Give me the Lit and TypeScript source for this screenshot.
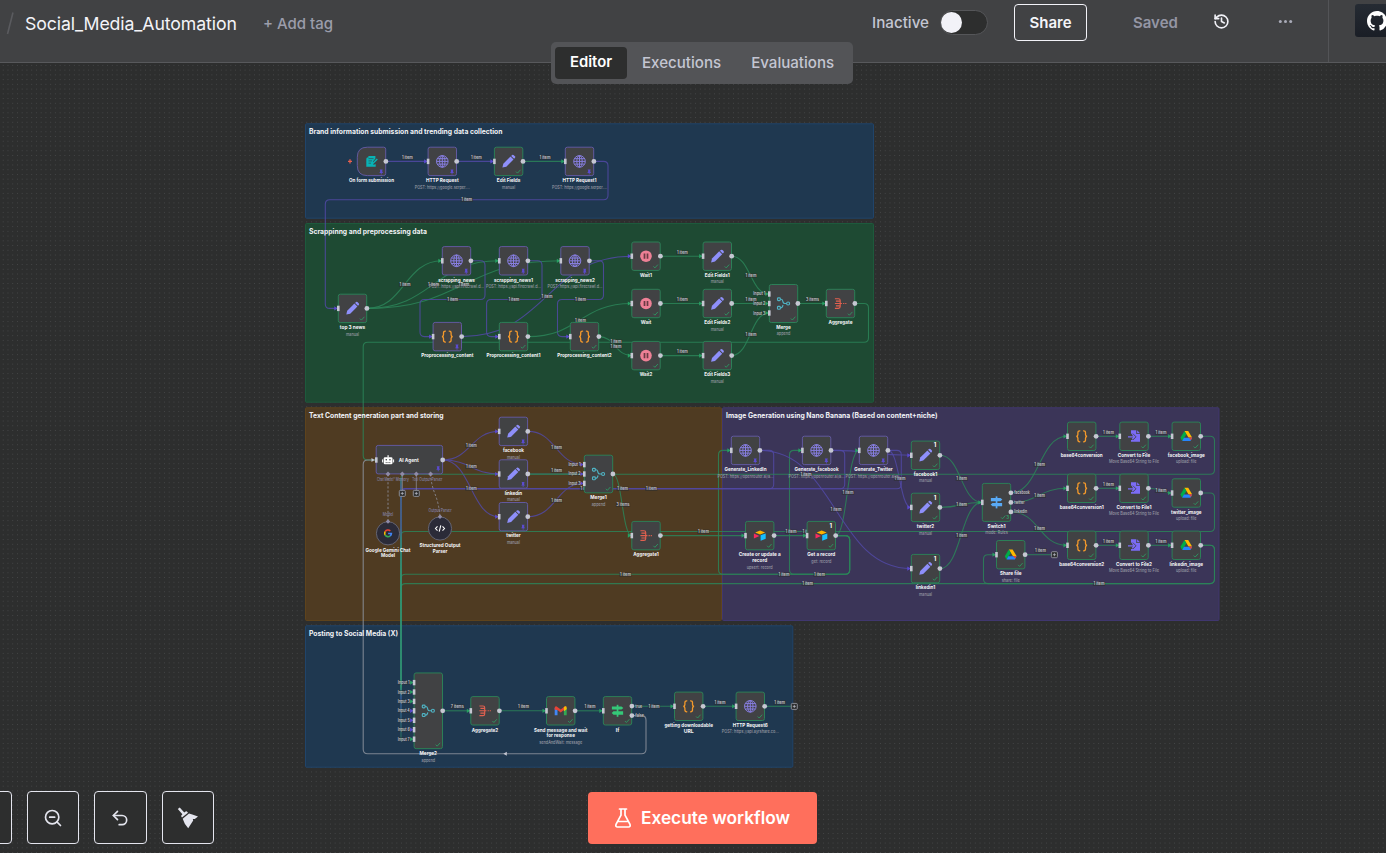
import { LitElement, html, svg, css, nothing } from "lit";
import { customElement } from "lit/decorators.js";

type Tone = "g" | "p" | "w" | "t";
const TONE: Record<Tone, string> = { g: "#2b8458", p: "#5149a5", w: "#8c929c", t: "#2f7f86" };

interface Sticky { x: number; y: number; w: number; h: number; fill: string; line: string; title: string; tw: number; tx?: number }
const stickies: Sticky[] = [
  { x: 305, y: 123.3, w: 569, h: 95.4, fill: "#1f3850", line: "#20446a", title: "Brand information submission and trending data collection", tw: 193.5 },
  { x: 305, y: 223, w: 569, h: 179.7, fill: "#1e4a33", line: "#1d5a3c", title: "Scrappinng and preprocessing data", tw: 118 },
  { x: 305, y: 407.3, w: 417, h: 213.7, fill: "#4f3b22", line: "#5e431c", title: "Text Content generation part and storing", tw: 134.5 },
  { x: 722, y: 407.3, w: 497.5, h: 213.7, fill: "#3b3558", line: "#40376f", title: "Image Generation using Nano Banana (Based on content+niche)", tw: 211.5, tx: 726 },
  { x: 305, y: 625.3, w: 488.3, h: 142.4, fill: "#1f3850", line: "#20446a", title: "Posting to Social Media (X)", tw: 89 },
];

interface Node {
  x: number; y: number; icon: string; name: string[]; w: number[]; sub?: string; sw?: number;
  s?: "pin" | "ok"; one?: boolean; h?: number; ins?: number[]; outs?: number[]; start?: boolean;
}
const GS = "POST: https://google.serper....";
const FC = "POST: https://api.firecrawl.d...";
const OR = "POST: https://openrouter.ai/a...";
const MV = "Move Base64 String to File";
const n = (x: number, y: number, icon: string, name: string, w: number, s: "pin" | "ok", sub?: string, sw?: number, more: Partial<Node> = {}): Node =>
  ({ x, y, icon, name: [name], w: [w], s, sub, sw, ...more });
const nodes: Node[] = [
  n(371.5, 161.4, "form", "On form submission", 45, "pin", undefined, 0, { start: true, ins: [] }),
  n(442.3, 161.4, "globe", "HTTP Request", 32.7, "pin", GS, 55),
  n(508.6, 161.4, "pencil", "Edit Fields", 23.5, "ok", "manual", 13),
  n(579.5, 161.4, "globe", "HTTP Request1", 34, "pin", GS, 55),
  n(352.5, 308.4, "pencil", "top 3 news", 25.5, "ok", "manual", 13),
  n(456.5, 260.8, "globe", "scrapping_news", 36.7, "pin", FC, 55),
  n(513.5, 260.8, "globe", "scrapping_news1", 39, "pin", FC, 55),
  n(575, 260.8, "globe", "scrapping_news2", 39.7, "pin", FC, 55),
  n(447.3, 336.6, "braces", "Proprocessing_content", 52.3, "pin"),
  n(513.5, 336.6, "braces", "Proprocessing_content1", 54, "ok"),
  n(584.5, 336.6, "braces", "Proprocessing_content2", 54.5, "ok"),
  n(646, 256.2, "pause", "Wait1", 12, "ok"),
  n(646, 303.5, "pause", "Wait", 10.5, "ok"),
  n(646, 355.6, "pause", "Wait2", 12.5, "ok"),
  n(717.3, 256.2, "pencil", "Edit Fields1", 25, "ok", "manual", 13),
  n(717.3, 303.5, "pencil", "Edit Fields2", 26, "ok", "manual", 13),
  n(717.3, 355.6, "pencil", "Edit Fields3", 26, "ok", "manual", 13),
  n(783.5, 303.5, "merge", "Merge", 14.5, "ok", "append", 13.5, { h: 38, ins: [-9.5, 0, 9.5] }),
  n(840.5, 303.5, "agg", "Aggregate", 24, "ok"),
  n(513.4, 431.4, "pencil", "facebook", 21, "pin", "manual", 13),
  n(513.4, 474, "pencil", "linkedin", 17.5, "pin", "manual", 13),
  n(513.4, 516.7, "pencil", "twitter", 14.5, "pin", "manual", 13),
  n(598.5, 474, "merge", "Merge1", 16.5, "ok", "append", 13.5, { h: 37.6, ins: [-9.4, 0, 9.4] }),
  n(646, 535.6, "agg", "Aggregate1", 25.5, "ok"),
  n(745.5, 450.4, "globe", "Generate_LinkedIn", 42, "pin", OR, 56),
  n(816.6, 450.4, "globe", "Generate_facebook", 44, "pin", OR, 56),
  n(873.5, 450.4, "globe", "Generate_Twitter", 38.5, "pin", OR, 56),
  { x: 759.7, y: 535.6, icon: "table", name: ["Create or update a", "record"], w: [42, 15], sub: "upsert: record", sw: 26, s: "ok" },
  n(821.3, 535.6, "table", "Get a record", 28, "ok", "get: record", 20, { one: true }),
  n(925.5, 455.3, "pencil", "facebook1", 23.5, "ok", "manual", 13, { one: true }),
  n(925.5, 507.4, "pencil", "twitter2", 17.5, "ok", "manual", 13, { one: true }),
  n(925.5, 568.6, "pencil", "linkedin1", 19.5, "ok", "manual", 13, { one: true }),
  n(996.5, 502.4, "switch", "Switch1", 18, "ok", "mode: Rules", 22.5, { h: 38, outs: [-9.6, 0, 9.5] }),
  n(1010.7, 554.7, "drive", "Share file", 21.5, "ok", "share: file", 18),
  n(1081.7, 436.3, "braces", "base64conversion", 42, "ok"),
  n(1134, 436.3, "file", "Convert to File", 32.5, "ok", MV, 50),
  n(1186.3, 436.3, "drive", "facebook_image", 37, "ok", "upload: file", 20.5),
  n(1081.7, 488.3, "braces", "base64conversion1", 44, "ok"),
  n(1134, 488.3, "file", "Convert to File1", 35, "ok", MV, 50),
  n(1186.3, 493, "drive", "twitter_image", 30.5, "ok", "upload: file", 20.5),
  n(1081.7, 545.3, "braces", "base64conversion2", 45, "ok"),
  n(1134, 545.3, "file", "Convert to File2", 36, "ok", MV, 50),
  n(1186.3, 545.3, "drive", "linkedin_image", 33.5, "ok", "upload: file", 20.5),
  n(428.3, 710.8, "merge", "Merge2", 17.5, "ok", "append", 13.5, { h: 75.7, ins: [-28.2, -18.8, -9.4, 0, 9.5, 18.9, 28.4] }),
  n(485, 710.8, "agg", "Aggregate2", 26.5, "ok"),
  { x: 560.7, y: 710.8, icon: "gmail", name: ["Send message and wait", "for response"], w: [53.5, 28.5], sub: "sendAndWait: message", sw: 43, s: "ok" },
  n(617.5, 710.8, "sign", "If", 3.6, "ok", undefined, 0, { outs: [-4.7, 4.8] }),
  { x: 688.7, y: 706.3, icon: "braces", name: ["getting downloadable", "URL"], w: [48.5, 10], s: "ok" },
  n(750.3, 706.3, "globe", "HTTP Request6", 35, "ok", "POST: https://api.ayrshare.co...", 57),
];

/* Cubic link between two handles */
const bz = (x1: number, y1: number, x2: number, y2: number) => {
  const m = Math.max((x2 - x1) / 2, 9);
  return `M${x1} ${y1}C${x1 + m} ${y1} ${x2 - m} ${y2} ${x2} ${y2}`;
};
/* Orthogonal link with rounded corners */
const rt = (...p: number[]) => {
  const pts: number[][] = [];
  for (let i = 0; i < p.length; i += 2) pts.push([p[i], p[i + 1]]);
  let d = `M${pts[0]}`;
  for (let i = 1; i < pts.length - 1; i++) {
    const [a, b, c] = [pts[i - 1], pts[i], pts[i + 1]];
    const toward = (q: number[]) => {
      const l = Math.hypot(q[0] - b[0], q[1] - b[1]) || 1;
      const r = Math.min(4.5, l / 2);
      return [b[0] + ((q[0] - b[0]) * r) / l, b[1] + ((q[1] - b[1]) * r) / l];
    };
    d += `L${toward(a)}Q${b} ${toward(c)}`;
  }
  return d + `L${pts[pts.length - 1]}`;
};

const edges: [Tone, string, number?][] = [
  ["p", bz(386, 161.4, 427, 161.4)], ["p", bz(457, 161.4, 494, 161.4)], ["g", bz(523, 161.4, 565, 161.4)],
  ["p", rt(594, 161.4, 608, 161.4, 608, 199.7, 325.3, 199.7, 325.3, 308.4, 338, 308.4)],
  ["g", bz(366.8, 308.4, 442, 260.8)], ["g", bz(366.8, 308.4, 499, 260.8)], ["g", bz(366.8, 308.4, 560.5, 260.8)],
  ["p", rt(471, 260.8, 485, 260.8, 485, 299.5, 420, 299.5, 420, 336.6, 433, 336.6)],
  ["p", rt(528, 260.8, 542, 260.8, 542, 299.5, 486.6, 299.5, 486.6, 336.6, 499, 336.6)],
  ["p", rt(589, 260.8, 603.5, 260.8, 603.5, 299.5, 557.5, 299.5, 557.5, 336.6, 570, 336.6)],
  ["p", bz(461.5, 336.6, 631.7, 256.2)], ["g", bz(527.7, 336.6, 631.7, 303.5)], ["g", bz(598.7, 336.6, 631.7, 355.6)],
  ["g", bz(660, 256.2, 703, 256.2)], ["g", bz(660, 303.5, 703, 303.5)], ["g", bz(660, 355.6, 703, 355.6)],
  ["g", bz(731.6, 256.2, 769, 294)], ["g", bz(731.6, 303.5, 769, 303.5)], ["g", bz(731.6, 355.6, 769, 313)],
  ["g", bz(798, 303.5, 826, 303.5)],
  ["g", rt(855, 303.5, 868.5, 303.5, 868.5, 342.2, 363.2, 342.2, 363.2, 460, 375, 460)],
  ["p", bz(442.7, 460, 499, 431.4)], ["p", bz(442.7, 460, 499, 474)], ["p", bz(442.7, 460, 499, 516.7)],
  ["p", bz(528, 431.4, 584, 464.6)], ["t", bz(528, 474, 584, 474)], ["p", bz(528, 516.7, 584, 483.4)],
  ["g", bz(612.7, 474, 631.7, 535.6)], ["g", bz(660.5, 535.6, 745, 535.6)], ["g", bz(774, 535.6, 807, 535.6)],
  ["g", rt(835.5, 535.6, 849.7, 535.6, 849.7, 574.3, 718.5, 574.3, 718.5, 450.4, 731, 450.4)],
  ["g", rt(835.5, 535.6, 849.7, 535.6, 849.7, 574.3, 789.5, 574.3, 789.5, 450.4, 802, 450.4)],
  ["g", bz(835.5, 535.6, 859, 450.4)],
  ["g", rt(835.5, 535.6, 849.7, 535.6, 849.7, 574.3, 401, 574.3, 401, 600)],
  ["p", bz(760, 450.4, 911, 568.6)], ["p", bz(831, 450.4, 911, 455.3)], ["p", bz(888, 450.4, 911, 507.4)],
  ["p", rt(760, 450.4, 773.7, 450.4, 773.7, 488.8, 401, 488.8, 401, 500)],
  ["p", rt(831, 450.4, 844.7, 450.4, 844.7, 488.8, 401, 488.8, 401, 500)],
  ["p", rt(888, 450.4, 901.3, 450.4, 901.3, 488.8, 401, 488.8, 401, 500)],
  ["g", bz(940, 455.3, 982, 502.4)], ["g", bz(940, 507.4, 982, 502.4)], ["g", bz(940, 568.6, 982, 502.4)],
  ["g", bz(1011, 492.8, 1067, 436.3)], ["g", bz(1011, 502.4, 1067, 488.3)], ["g", bz(1011, 511.9, 1067, 545.3)],
  ["g", bz(1096, 436.3, 1120, 436.3)], ["g", bz(1148, 436.3, 1172, 436.3)],
  ["g", bz(1096, 488.3, 1120, 488.3)], ["g", bz(1148, 488.3, 1172, 493)],
  ["g", bz(1096, 545.3, 1120, 545.3)], ["g", bz(1148, 545.3, 1172, 545.3)],
  ["g", rt(1200.5, 436.3, 1214.5, 436.3, 1214.5, 474.3, 401, 474.3, 401, 500)],
  ["g", rt(1200.5, 493, 1214.5, 493, 1214.5, 531.5, 401, 531.5, 401, 560)],
  ["g", rt(1200.5, 545.3, 1214.5, 545.3, 1214.5, 583.6, 401, 583.6, 401, 610)],
  ["g", rt(1200.5, 545.3, 1214.5, 545.3, 1214.5, 583.6, 983.5, 583.6, 983.5, 554.7, 996, 554.7)],
  ["g", "M1025 554.7H1051"],
  ["g", bz(443, 710.8, 470, 710.8)], ["g", bz(499.5, 710.8, 546, 710.8)], ["g", bz(575, 710.8, 603, 710.8)],
  ["g", bz(632, 706.2, 674, 706.3)], ["g", bz(703, 706.3, 736, 706.3)], ["g", "M765 706.3H791"],
  ["w", rt(632, 715.6, 646, 715.6, 646, 753.8, 363.2, 753.8, 363.2, 460, 375, 460)],
];

/* x, y, text, width */
const tags: [number, number, string?, number?][] = [
  [407.3, 157.5], [476.3, 157.5], [545, 157.5], [466.7, 199.7],
  [405, 284.7], [433.5, 284.7], [463.8, 284.7], [452.7, 299.6], [513.8, 299.6], [580.5, 299.6], [547, 296.6], [580.5, 320.4],
  [616, 341.6], [616, 346.6], [682.3, 252.6], [682.3, 299.7], [682.3, 351.7], [751, 275.6], [751, 299.7], [751, 334.5], [812.5, 299.7, "3 items", 13],
  [471.3, 445.7], [471.3, 466.7], [471.3, 488.6], [556.7, 447.7], [556.7, 470.5], [556.7, 500.5],
  [586, 488.8], [622.7, 488.8], [651.3, 488.8], [623, 504.8, "3 items", 13], [703.5, 531.8], [791, 531.8], [808, 531.8],
  [784, 574.6], [819.5, 574.6], [625.5, 574.6], [848, 492.7], [836, 509.5], [806, 474.5], [900, 478.7],
  [961.7, 478.7], [961.7, 504.8], [961.7, 535.8], [1039.7, 464.7], [1039.7, 495.8], [1039.7, 528.7],
  [1108.5, 432.7], [1161, 432.7], [1108.5, 484.6], [1161, 490.8], [1108.5, 541.7], [1161, 541.7],
  [1099, 583.8], [807.7, 583.8], [1040.5, 550.7],
  [457.3, 706.5, "7 items", 13], [523.5, 706.5], [590, 706.5], [654, 706.4], [720, 702.6], [779.7, 702.6],
];
/* Port captions drawn next to multi-port nodes */
const ports: [number, number, string, number][] = [
  [759.3, 293.8, "Input 1", 12], [759.3, 303.6, "Input 2", 12], [759.3, 313, "Input 3", 12],
  [574.5, 464.7, "Input 1", 12], [574.5, 473.9, "Input 2", 12], [574.5, 483.5, "Input 3", 12],
  ...[0, 1, 2, 3, 4, 5, 6].map((i): [number, number, string, number] =>
    [403.7, 682.7 + i * 9.42, `Input ${i + 1}`, 12]),
];
const outs: [number, number, string, number][] = [
  [1022, 492.8, "facebook", 15.5], [1019.4, 502.5, "twitter", 10.5], [1020.6, 511.8, "linkedin", 13],
  [638.7, 706.4, "true", 6.8], [639.6, 715.7, "false", 8.5],
];

const signpost = (c: string) => svg`<g fill=${c}><rect x="-.8" y="-6" width="1.7" height="12"/><path d="M-5.6-4.4H4l1.800 1.600L4-1.200H-5.600z"/><path d="M5.600.500H-4l-1.800 1.700L-4 3.900H5.600z"/></g>`;

const icons: Record<string, unknown> = {
  globe: svg`<g fill="none" stroke="#877ee0" stroke-width="1"><circle r="5.8"/><ellipse rx="2.7" ry="5.8"/><path d="M-5.8 0H5.8M0-5.8V5.8M-5-2.7H5M-5 2.7H5"/></g>`,
  pencil: svg`<g fill="#8e8ffa"><path d="M-6.2 6.2l.9-3.9L1.9-4.9l3 3-7.2 7.2z"/><path d="M2.6-5.5l.9-.8q.9-.6 1.7.2l1 1q.8.9.1 1.7l-.8.8z"/></g>`,
  braces: svg`<g fill="none" stroke="#f59a2b" stroke-width="1.3" stroke-linecap="round"><path d="M-1.900-5.500q-1.900 0-1.900 1.800v1.800q0 1.600-1.500 1.900q1.500.3 1.500 1.900v1.800q0 1.800 1.900 1.800M1.900-5.500q1.900 0 1.900 1.800v1.800q0 1.600 1.500 1.900q-1.500.3-1.500 1.900v1.800q0 1.800-1.900 1.800"/></g>`,
  pause: svg`<circle r="5.8" fill="#ee8096"/><path d="M-1.5-2.6V2.6M1.5-2.6V2.6" stroke="#6b3a44" stroke-width="1.7"/>`,
  merge: svg`<g fill="none" stroke="#4fb3c4" stroke-width="1.15"><rect x="-6" y="-5.7" width="2.8" height="2.8" rx=".8"/><rect x="-6" y="2.9" width="2.8" height="2.8" rx=".8"/><circle cx="4.6" r="1.5"/><path d="M-3.2-4.3h.7q1.3 0 1.7 1.6l.3 1.2Q-.1 0 1.3 0H3.1M-3.2 4.3h.7q1.3 0 1.7-1.6l.3-1.2"/></g>`,
  agg: svg`<g fill="none" stroke="#e2604f" stroke-width="1.15"><path d="M-5.6-4.8H-2q1.7 0 1.7 1.7V3.1q0 1.7-1.7 1.7H-5.6M-4.6-2.4H-.4M-5.6 0H1.4M-4.6 2.4H-.4M2.6 0h1.2M4.7 0h1.2"/></g>`,
  form: svg`<path d="M-4.500-3.900h1.400v-1.600h7v2.700L1.500.2v2.800h2.200L4.200 2v3.400H-5.200V-2q0-1.200.7-1.900z" fill="#08b3b5"/><path d="M-3-2.800H2M-3-.5H.5M-3 1.800H-.5" stroke="#2d5a60" stroke-width=".8"/><path d="M1.300 2.200L5.800-2.400" stroke="#08b3b5" stroke-width="1.5"/>`,
  switch: signpost("#58a9f5"),
  sign: signpost("#35c878"),
  table: svg`<path d="M-4.6-3.1L.4-5l5 1.9-5 1.9z" fill="#fcb400"/><path d="M.9-.3L6-2.2V3.2L.9 5.2z" fill="#18bfff"/><path d="M-5.8-2.2L-.3.3-5.8 3z" fill="#f82b60"/>`,
  drive: svg`<path d="M-1.9-5.3H1.9L5.8 1.3H2.2z" fill="#ffba00"/><path d="M-1.9-5.3L-5.9 1.5-4.1 4.7 .1-2z" fill="#00ac47"/><path d="M-2.4 1.5H5.9L4.2 4.8h-8.3z" fill="#2684fc"/><path d="M2.3 1.3h3.6L4.6 3.9z" fill="#ea4335"/>`,
  file: svg`<path d="M-3-6H2.3V-2.4H6V5.4H-3V3.6h2.3L2.5.5-.7-2.6H-3z" fill="#7b6cf6"/><path d="M3.1-6L6-3.1H3.1z" fill="#7b6cf6"/><path d="M-6 .5H1M-1.8-2L.8.5-1.8 3" fill="none" stroke="#7b6cf6" stroke-width="1.2"/>`,
  gmail: svg`<path d="M-6-3v7.5h2.8V-1.4z" fill="#4285f4"/><path d="M6-3v7.5H3.2V-1.4z" fill="#34a853"/><path d="M-6-3q.2-1.9 2-1.4L0-1.3 4-4.4q1.4-.4 1.6.2L3.2-.8 0 1.6-3.2-.8-6-1z" fill="#ea4335"/><path d="M3.2-3.8q2.6-1.6 2.8.8v1.4L3.2.5z" fill="#fbbc04"/>`,
};

const caption = (x: number, y: number, text: string, w: number, cls: string, anchor = "middle") =>
  svg`<text class=${cls} x=${x} y=${y} text-anchor=${anchor} textLength=${w} lengthAdjust="spacingAndGlyphs">${text}</text>`;

@customElement("workflow-canvas")
export class WorkflowCanvas extends LitElement {
  static styles = css`
    :host { display: block; width: 1386px; height: 853px; }
    svg { display: block; }
    text { font-family: Inter, "Open Sans", sans-serif; }
    .title { font-size: 7.1px; font-weight: 700; fill: #eff1f5; }
    .name { font-size: 5.2px; font-weight: 700; fill: #f4f4f6; }
    .sub { font-size: 4.4px; font-weight: 500; fill: #989aa4; }
    .tag { font-size: 4.2px; font-weight: 600; fill: #c6c7cf; }
    .agent { font-size: 5.4px; font-weight: 700; fill: #f4f4f6; }
    .port { font-size: 4.2px; font-weight: 500; fill: #8482a8; }
    .one { font-size: 5.8px; font-weight: 700; fill: #fff; }
    .edge { fill: none; }
    .runs { font-size: 4.4px; font-weight: 600; fill: #2fa56c; }
  `;

  private handle(x: number, y: number, c: string) {
    return svg`<path d="M${x - 4} ${y - 2.1}l3.400 2.100-3.400 2.100z" fill=${c}/><rect x=${x - 1.3} y=${y - 2.7} width="2.6" height="5.4" fill="#c5c7d2"/>`;
  }

  private node(d: Node) {
    const h = d.h ?? 28.4;
    const top = d.y - h / 2, bot = d.y + h / 2, l = d.x - 14.2, r = d.x + 14.2;
    const line = d.s === "ok" ? "#2c7f57" : "#62599f";
    const shape = d.start
      ? `M${l + 10} ${top}H${r - 2}q2 0 2 2V${bot - 2}q0 2-2 2H${l + 10}q-10 0-10-10V${top + 10}q0-10 10-10z`
      : `M${l + 2} ${top}H${r - 2}q2 0 2 2V${bot - 2}q0 2-2 2H${l + 2}q-2 0-2-2V${top + 2}q0-2 2-2z`;
    const title = d.name[0];
    const pinned = d.s === "pin" && title !== "scrapping_news" && title !== "scrapping_news1" && title !== "scrapping_news2" && !title.startsWith("Generate");
    const tone = pinned || title === "Wait1" || title === "facebook1" || title === "twitter2" || title === "linkedin1" ? "#5a49d0" : "#27a063";
    const inTone = (i: number) => {
      if (title === "HTTP Request1") return "#27a063";
      if (title === "Edit Fields" || title === "top 3 news" || title === "Merge1" || title === "Proprocessing_content1" || title === "Proprocessing_content2") return "#5a49d0";
      if (title === "Merge2") return i > 2 && i < 6 ? "#5a49d0" : "#27a063";
      return tone;
    };
    return svg`
      <path d=${shape} fill="#414244" stroke=${line} stroke-width="1"/>
      ${(d.ins ?? [0]).map((o, i) => this.handle(l, d.y + o, inTone(i)))}
      ${(d.outs ?? [0]).map((o) => svg`<circle cx=${r + 0.2} cy=${d.y + o} r="2.4" fill="#c5c7d2"/>`)}
      <g transform="translate(${d.x} ${d.y})">${icons[d.icon]}</g>
      ${d.s === "ok"
        ? svg`<path d="M${d.x + 7.4} ${bot - 4}l1.5 1.5 3-3.3" fill="none" stroke="#2b9a63" stroke-width=".9"/>`
        : svg`<path d="M${d.x + 8.1} ${bot - 6.2}h3.2l-.5.8v1.6l.8 1.2h-1.5v1.5h-.8v-1.5H${d.x + 7.8}l.8-1.2v-1.6z" fill="#5b4bd0"/>`}
      ${title === "Switch1" ? svg`<rect x=${d.x + 7} y=${bot - 7} width="6" height="5.500" fill="#414244"/><text class="runs" x=${d.x + 9.8} y=${bot - 2.6}>3</text><path d="M${d.x + 4.6} ${bot - 4}l1.4 1.4 2.8-3.2" fill="none" stroke="#2b9a63" stroke-width=".9"/>` : nothing}
      ${d.one ? svg`<text class="one" x=${d.x + 8.3} y=${top + 6.3}>1</text>` : nothing}`;
  }

  private names(d: Node) {
    const base = d.y + (d.h ?? 28.4) / 2 + 6.5;
    const extra = (d.name.length - 1) * 5.8;
    return svg`${d.name.map((t, i) => caption(d.x, base + i * 5.8, t, d.w[i], "name"))}
      ${d.sub ? caption(d.x, base + 6.4 + extra, d.sub, d.sw!, "sub") : nothing}`;
  }

  private plus(x: number, y: number) {
    return svg`<rect x=${x - 3} y=${y - 3} width="6" height="6" rx="1" fill="#2d2e2e" stroke="#94969f" stroke-width=".9"/><path d="M${x - 1.5} ${y}h3M${x} ${y - 1.5}v3" stroke="#b5b7c1" stroke-width=".8"/>`;
  }

  private agent() {
    return svg`
      <rect x="376.2" y="445.4" width="66.4" height="28.5" rx="2" fill="#414244" stroke="#62599f"/>
      <path d="M388 474V521M430.6 474Q431 484 435 494T440 517" stroke="#8a8a96" stroke-width=".9" stroke-dasharray="2.2 1.9" fill="none"/>
      <path d="M402.3 474V490M416.3 474V490" stroke="#8a8a96" stroke-width=".8"/>
      ${[388, 402.3, 416.3, 430.6].map((x) => svg`<path d="M${x - 2.4} 474l2.400-2.400 2.400 2.400-2.400 2.400z" fill="#8f8ba8"/>`)}
      <path d="M371.5 458l3 2-3 2z" fill="#c5c7d2"/><rect x="375" y="457.3" width="2.6" height="5.4" fill="#c5c7d2"/>
      <circle cx="442.7" cy="460" r="2.4" fill="#c5c7d2"/>
      <g fill="#fff"><rect x="383.7" y="457.3" width="8.8" height="7" rx="1.3"/><rect x="382.1" y="459.4" width="1" height="3"/><rect x="393.1" y="459.4" width="1" height="3"/><rect x="387.5" y="455.2" width="1.2" height="2.4"/></g>
      <path d="M386.2 459.8h.1M389.9 459.8h.1" stroke="#414244" stroke-width="1.5" stroke-linecap="round"/><path d="M385.6 462.6h5" stroke="#414244" stroke-width=".8" stroke-dasharray="1.2 .6"/>
      <path d="M436.6 466.200h3.200l-.5.8v1.600l.8 1.200h-1.500v1.500h-.8v-1.500h-1.500l.8-1.200v-1.600z" fill="#5b4bd0"/>
      ${caption(398.7, 462.4, "AI Agent", 20, "agent", "start")}
      ${caption(386, 481, "Chat Model*", 18, "port")}${caption(402.3, 481, "Memory", 13, "port")}
      ${caption(415.3, 481, "Tool", 6, "port")}${caption(430.8, 481, "Output Parser", 23, "port")}
      ${caption(388, 516, "Model", 10.5, "port")}${caption(440, 511.8, "Output Parser", 23, "port")}
      ${this.plus(402.3, 493.4)}${this.plus(416.3, 493.4)}
      <circle cx="388" cy="533.3" r="11.6" fill="#2b2b38" stroke="#6a6a78" stroke-width=".9"/>
      <circle cx="440" cy="528.5" r="11.6" fill="#2b2b38" stroke="#6a6a78" stroke-width=".9"/>
      <path d="M385.8 521.5l2.2-2.2 2.2 2.2-2.2 2.2zM437.8 516.8l2.2-2.2 2.2 2.2-2.2 2.2z" fill="#8f8ba8"/>
      <g transform="translate(388 533.3)" fill="none" stroke-width="1.6"><path d="M2.3-2.4A3.4 3.4 0 0 0-2.9-1.7" stroke="#ea4335"/><path d="M-2.9-1.7A3.4 3.4 0 0 0-2.9 1.7" stroke="#fbbc04"/><path d="M-2.9 1.7A3.4 3.4 0 0 0 2.2 2.6" stroke="#34a853"/><path d="M2.2 2.6A3.4 3.4 0 0 0 3.4.2H.1" stroke="#4285f4"/></g>
      <path d="M437.5 526.3l-2 2.2 2 2.2M442.5 526.3l2 2.2-2 2.2M440.8 525.3l-1.6 6.4" stroke="#fff" fill="none" stroke-width="1.1"/>
      ${caption(388, 552, "Google Gemini Chat", 45, "name")}${caption(388, 557.2, "Model", 14, "name")}
      ${caption(440, 547.2, "Structured Output", 41, "name")}${caption(440, 553, "Parser", 14.5, "name")}`;
  }

  render() {
    return html`<svg width="1386" height="853" viewBox="0 0 1386 853">
      <defs>
        <pattern id="dots" x="0.85" y="1.35" width="4.742" height="4.742" patternUnits="userSpaceOnUse"><circle cx="2.37" cy="2.37" r=".5" fill="#4c4d4e"/></pattern>
        <linearGradient id="trunk" gradientUnits="userSpaceOnUse" x1="0" y1="474" x2="0" y2="740">
          <stop offset="0" stop-color="#2b8458"/><stop offset=".05" stop-color="#43618f"/><stop offset=".2" stop-color="#43618f"/><stop offset=".24" stop-color="#35807e"/><stop offset=".38" stop-color="#2f9472"/><stop offset=".8" stop-color="#2f9472"/><stop offset=".84" stop-color="#31558c"/><stop offset="1" stop-color="#245a55"/>
        </linearGradient>
      </defs>
      <rect width="1386" height="853" fill="#2d2e2e"/><rect width="1386" height="853" fill="url(#dots)"/>
      ${stickies.map((s) => svg`<rect x=${s.x + 0.5} y=${s.y + 0.5} width=${s.w - 1} height=${s.h - 1} rx="1" fill=${s.fill} stroke=${s.line}/>`)}
      ${edges.map(([t, d]) => svg`<path class="edge" d=${d} stroke=${TONE[t]} stroke-width="1.1" stroke-opacity=".85"/>`)}
      <rect x="400.1" y="478" width="1.8" height="262" fill="url(#trunk)"/>
      <path d="M506.8 751.8l-3.4 2 3.4 2z" fill="#c5c7d2"/>
      ${tags.map(([x, y, t, w]) => svg`<rect x=${x - (w ?? 11) / 2 - 0.6} y=${y - 2.2} width=${(w ?? 11) + 1.2} height="4.4" fill="#2d2e2e" fill-opacity=".6"/>${caption(x, y + 1.5, t ?? "1 item", w ?? 10.8, "tag")}`)}
      ${nodes.map((d) => this.node(d))}
      ${this.agent()}
      ${ports.map(([x, y, t, w]) => svg`<rect x=${x - w / 2} y=${y - 2} width=${w} height="4" fill="#2d2e2e" fill-opacity=".45"/>${caption(x, y + 1.5, t, w, "tag")}`)}
      ${outs.map(([x, y, t, w]) => svg`<rect x=${x - w / 2} y=${y - 2} width=${w} height="4" fill="#2d2e2e" fill-opacity=".5"/>${caption(x, y + 1.4, t, w, "tag")}`)}
      ${this.plus(1054.4, 554.7)}${this.plus(794.3, 706.4)}
      <path d="M350 159.2v4.2M348 161.3h4" stroke="#e8604e" stroke-width="1.3"/>
      ${nodes.map((d) => this.names(d))}
      ${stickies.map((s) => caption(s.tx ?? 309, s.y + 10.6, s.title, s.tw, "title", "start"))}
    </svg>`;
  }
}

@customElement("app-root")
export class AppRoot extends LitElement {
  static styles = css`
    :host { display: block; position: relative; width: 1386px; height: 853px; overflow: hidden; background: #2d2e2e; font-family: Inter, "Open Sans", sans-serif; }
    * { box-sizing: border-box; }
    .stage { position: absolute; inset: 0; }
    header { position: relative; display: flex; align-items: flex-start; height: 63px; background: #414244; border-bottom: 1px solid #58595c; white-space: nowrap; }
    .crumb { display: flex; align-items: center; height: 46px; padding-left: 6px; }
    .slash { display: block; margin-right: 11px; }
    .name { font-size: 17.7px; width: 212px; letter-spacing: -0.1px; color: #f4f4f8; }
    .add { margin-left: 26px; font-size: 15px; font-weight: 500; color: #9b9dab; }
    .actions { margin-left: auto; display: flex; height: 62px; align-items: flex-start; }
    .state { display: flex; align-items: center; height: 45px; font-size: 15.2px; font-weight: 500; color: #c4c6d2; gap: 12px; }
    .label { width: 56px; }
    .toggle { width: 48px; height: 25px; border-radius: 13px; border: 1px solid #555659; background: #2d2e2e; padding: 1px 0; }
    .knob { width: 21px; height: 21px; border-radius: 50%; background: #f2f2f8; }
    .share { margin: 4px 0 0 26px; width: 73px; height: 37px; border: 1px solid #f2f2f8; border-radius: 4px; background: none; color: #f4f4f8; font: 600 15px Inter, sans-serif; padding: 0; }
    .saved { margin-left: 46px; width: 45px; line-height: 45px; font-size: 15px; font-weight: 600; color: #9496a4; }
    .hist { margin: 13px 0 0 35px; }
    .more { margin: 19px 0 0 48px; }
    .star { margin-left: 35px; width: 58px; height: 62px; border-left: 1px solid #535457; padding: 4px 0 0 26px; }
    .gh { width: 60px; height: 33px; border-radius: 3px; background: linear-gradient(#252b33, #1a1e26); padding: 7px 0 0 12px; }
    .tabs { position: absolute; left: 551px; top: 42px; width: 302px; height: 42px; border-radius: 5px; background: #535457; padding: 5px 4px; display: flex; font-size: 15.1px; font-weight: 500; color: #c4c6d2; }
    .tab { height: 32px; line-height: 31px; padding: 0 15px; white-space: nowrap; }
    .on { background: #2d2e2e; color: #fff; border-radius: 4px; font-weight: 600; font-size: 14.8px; width: 72px; }
    .tools { position: absolute; left: -41px; top: 791px; display: flex; gap: 15px; }
    .tool { width: 52.5px; height: 53px; border: 1px solid #e4e5ee; border-radius: 4px; background: #2d2e2e; display: grid; place-items: center; }
    .run { position: absolute; left: 587.5px; top: 792px; width: 229px; height: 52px; border: 0; border-radius: 4px; background: #ff6f5c; color: #fff; display: flex; align-items: center; justify-content: center; gap: 9px; font: 600 17.3px Inter, sans-serif; padding: 0 0 1px; white-space: nowrap; }
  `;

  render() {
    return html`
      <div class="stage"><workflow-canvas></workflow-canvas></div>
      <header>
        <div class="crumb">
          <svg class="slash" width="8" height="24" viewBox="0 0 8 24"><path d="M1.5 23L7 1.5" stroke="#5a5b5f" stroke-width="1.6"/></svg>
          <span class="name">Social_Media_Automation</span>
          <span class="add">+ Add tag</span>
        </div>
        <div class="actions">
          <div class="state"><span class="label">Inactive</span><div class="toggle"><div class="knob"></div></div></div>
          <button class="share">Share</button>
          <span class="saved">Saved</span>
          <svg class="hist" width="17" height="17" viewBox="0 0 24 24" fill="none" stroke="#f2f2f8" stroke-width="2.3" stroke-linecap="round" stroke-linejoin="round"><path d="M3 12a9 9 0 1 0 9-9 9.75 9.75 0 0 0-6.74 2.74L3 8"/><path d="M3 3v5h5M12 7v5l4 2"/></svg>
          <svg class="more" width="15" height="5" viewBox="0 0 15 5" fill="#a9abb8"><circle cx="2.3" cy="2.5" r="1.5"/><circle cx="7.5" cy="2.5" r="1.5"/><circle cx="12.7" cy="2.5" r="1.5"/></svg>
          <div class="star"><div class="gh"><svg width="20" height="20" viewBox="0 0 16 16" fill="#fff"><path d="M8 0C3.58 0 0 3.58 0 8c0 3.54 2.29 6.53 5.47 7.59.4.07.55-.17.55-.38 0-.19-.01-.82-.01-1.49-2.01.37-2.53-.49-2.69-.94-.09-.23-.48-.94-.82-1.13-.28-.15-.68-.52-.01-.53.63-.01 1.08.58 1.23.82.72 1.21 1.87.87 2.33.66.07-.52.28-.87.51-1.07-1.78-.2-3.64-.89-3.64-3.95 0-.87.31-1.59.82-2.15-.08-.2-.36-1.02.08-2.12 0 0 .67-.21 2.2.82.64-.18 1.32-.27 2-.27s1.36.09 2 .27c1.53-1.04 2.2-.82 2.2-.82.44 1.1.16 1.92.08 2.12.51.56.82 1.27.82 2.15 0 3.07-1.87 3.75-3.65 3.95.29.25.54.73.54 1.48 0 1.07-.01 1.93-.01 2.2 0 .21.15.46.55.38A8.01 8.01 0 0 0 16 8c0-4.42-3.58-8-8-8z"/></svg></div></div>
        </div>
      </header>
      <nav class="tabs"><span class="tab on">Editor</span><span class="tab">Executions</span><span class="tab">Evaluations</span></nav>
      <div class="tools">
        <div class="tool"></div>
        <div class="tool"><svg width="20" height="20" viewBox="0 0 24 24" fill="none" stroke="#e4e5ee" stroke-width="2" stroke-linecap="round"><circle cx="11" cy="11" r="8"/><path d="M21 21l-4.3-4.3M8 11h6"/></svg></div>
        <div class="tool"><svg width="20" height="20" viewBox="0 0 24 24" fill="none" stroke="#e4e5ee" stroke-width="2" stroke-linecap="round" stroke-linejoin="round"><path d="M9 14L4 9l5-5"/><path d="M4 9h10.5a5.5 5.5 0 0 1 0 11H11"/></svg></div>
        <div class="tool"><svg width="22" height="22" viewBox="0 0 22 22" fill="#e4e5ee"><path d="M.8 1.900L2.700.4 7.300 5.600 8.600 4.600q1-.6 1.800.3l.6.8-6 4.800-.6-.8q-.6-1 .3-1.800l.7-.6z"/><path d="M5.700 11.700l6.300-5.100 3.300.9 5.700 1.900-3.200 2.700-2-.1.400 1.500-5 7.800-3.400-4.600z"/></svg></div>
      </div>
      <button class="run">
        <svg width="18" height="20" viewBox="0 0 18 20" fill="none" stroke="#fff" stroke-width="1.7" stroke-linecap="round" stroke-linejoin="round"><path d="M5.500 1h7M7 1v6.200L2 16.400Q1.300 19 3.500 19H14.500q2.200 0 1.500-2.600L11 7.200V1M4.500 13.500h9"/></svg>
        <span>Execute workflow</span>
      </button>`;
  }
}
